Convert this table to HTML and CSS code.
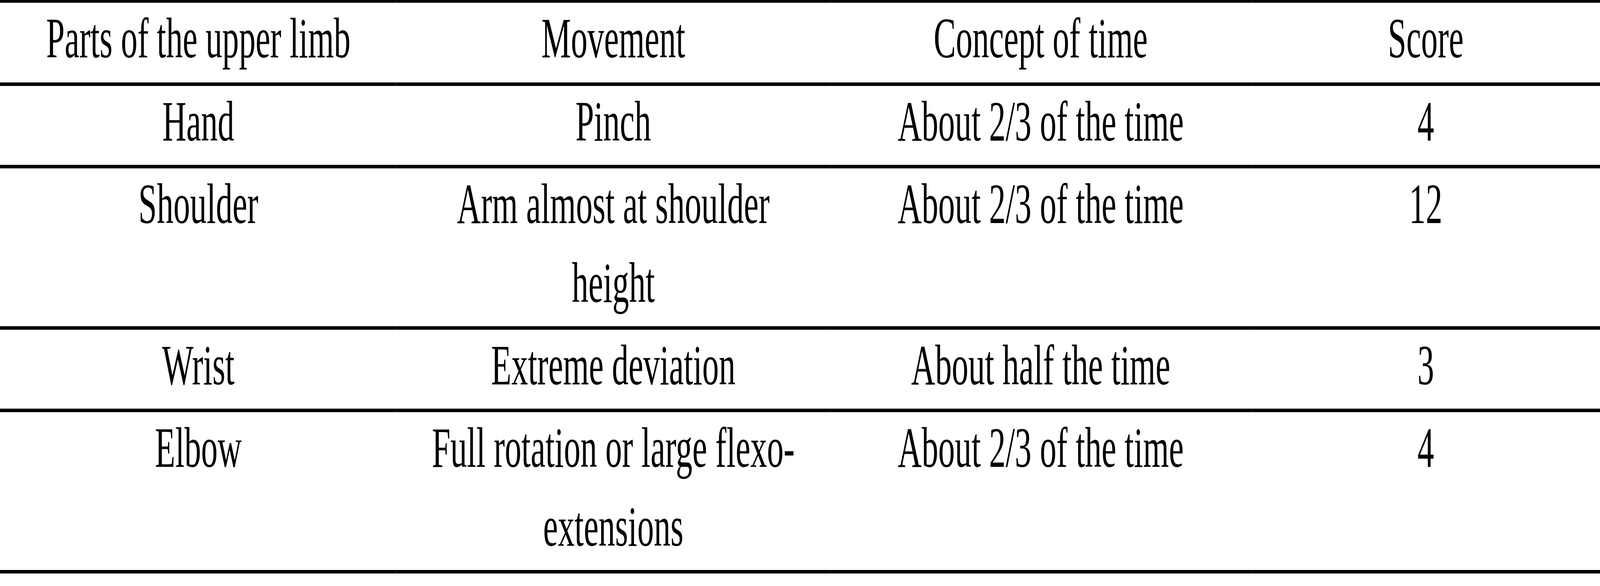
FILE: index.html
```html
<!DOCTYPE html>
<html lang="en">
<head>
<meta charset="utf-8">
<title>Upper limb scores</title>
<link rel="stylesheet" href="styles.css">
</head>
<body>
<div class="frame">
<table class="score-table">
  <colgroup>
    <col class="col-part">
    <col class="col-move">
    <col class="col-time">
    <col class="col-score">
  </colgroup>
  <thead>
    <tr>
      <th><span class="t">Parts of the upper limb</span></th>
      <th><span class="t">Movement</span></th>
      <th><span class="t">Concept of time</span></th>
      <th><span class="t">Score</span></th>
    </tr>
  </thead>
  <tbody>
    <tr>
      <td><span class="t">Hand</span></td>
      <td><span class="t">Pinch</span></td>
      <td><span class="t">About 2/3 of the time</span></td>
      <td><span class="t">4</span></td>
    </tr>
    <tr>
      <td><span class="t">Shoulder</span></td>
      <td><span class="t">Arm almost at shoulder height</span></td>
      <td><span class="t">About 2/3 of the time</span></td>
      <td><span class="t">12</span></td>
    </tr>
    <tr>
      <td><span class="t">Wrist</span></td>
      <td><span class="t">Extreme deviation</span></td>
      <td><span class="t">About half the time</span></td>
      <td><span class="t">3</span></td>
    </tr>
    <tr>
      <td><span class="t">Elbow</span></td>
      <td><span class="t">Full rotation or large flexo-extensions</span></td>
      <td><span class="t">About 2/3 of the time</span></td>
      <td><span class="t">4</span></td>
    </tr>
  </tbody>
</table>
</div>
</body>
</html>
```
FILE: styles.css
```css
html, body {
  margin: 0;
  padding: 0;
  background: #ffffff;
  overflow: hidden;
}

.frame {
  width: 100%;
  overflow: hidden;
}

.score-table {
  width: 7083px;
  table-layout: fixed;
  border-collapse: separate;
  border-spacing: 0;
  font-family: "Liberation Serif", "Times New Roman", serif;
  font-size: 147px;
  color: #000000;
}

@media (max-width: 7000px) {
  .score-table {
    transform: scaleX(0.57829);
    transform-origin: 0 0;
  }
}

.col-part { width: 1756px; }
.col-move { width: 1918px; }
.col-time { width: 1866px; }
.col-score { width: 1543px; }

.score-table th,
.score-table td {
  font-weight: normal;
  text-align: center;
  vertical-align: top;
  line-height: 202px;
  padding: 0 0 10px;
  border-bottom: 9px solid #000000;
}

.score-table th {
  border-top: 7px solid #000000;
  padding-bottom: 12px;
}

.score-table .t {
  display: block;
  margin: -10px 100px 0;
}
```
